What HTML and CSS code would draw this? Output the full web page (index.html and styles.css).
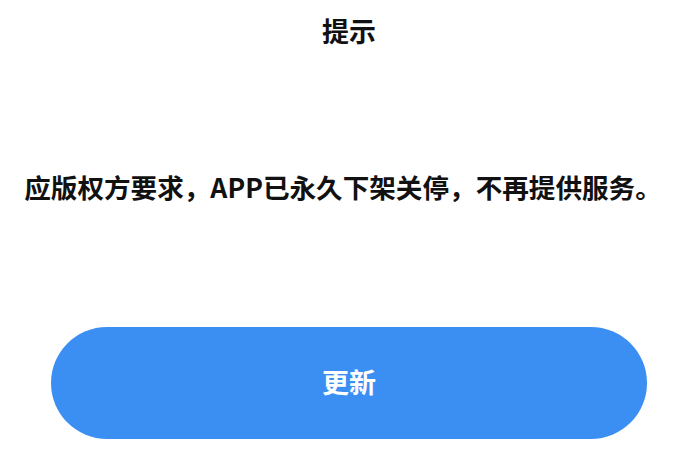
FILE: index.html
```html
<!DOCTYPE html>
<html lang="zh-CN">
<head>
<meta charset="utf-8">
<link rel="stylesheet" href="styles.css">
</head>
<body>
<div class="dialog">
  <div class="title">提示</div>
  <div class="message">应版权方要求，APP已永久下架关停，不再提供服务。</div>
  <div class="actions"><button class="btn">更新</button></div>
</div>
</body>
</html>
```
FILE: styles.css
```css
html, body {
  margin: 0;
  padding: 0;
  background: #ffffff;
}
body {
  width: 678px;
  height: 460px;
  font-family: "Noto Sans CJK SC", "Noto Sans", sans-serif;
  color: #111111;
}
.dialog {
  display: flex;
  flex-direction: column;
  align-items: center;
}
.title {
  margin-top: 12px;
  margin-left: 20px;
  height: 38px;
  line-height: 38px;
  font-size: 27px;
  font-weight: 700;
}
.message {
  margin-top: 117px;
  margin-left: 8px;
  height: 40px;
  line-height: 40px;
  font-size: 26.6px;
  font-weight: 700;
  white-space: nowrap;
}
.actions {
  margin-top: 120px;
  margin-left: 20px;
  width: 596px;
}
.btn {
  display: flex;
  align-items: center;
  justify-content: center;
  width: 596px;
  height: 112px;
  border: none;
  border-radius: 56px;
  background: #3b8ff2;
  color: #ffffff;
  font-family: "Noto Sans CJK SC", "Noto Sans", sans-serif;
  font-size: 27px;
  font-weight: 700;
  padding: 0 0 3px 0;
}
```
